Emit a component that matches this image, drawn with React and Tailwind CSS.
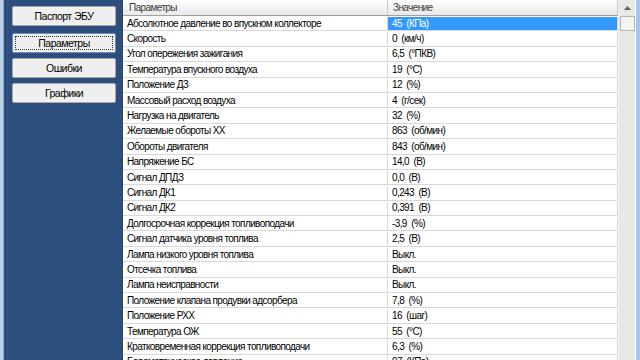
import React from 'react';

const rows = [
  ['Абсолютное давление во впускном коллекторе', '45  (КПа)'],
  ['Скорость', '0  (км/ч)'],
  ['Угол опережения зажигания', '6,5  (°ПКВ)'],
  ['Температура впускного воздуха', '19  (°C)'],
  ['Положение ДЗ', '12  (%)'],
  ['Массовый расход воздуха', '4  (г/сек)'],
  ['Нагрузка на двигатель', '32  (%)'],
  ['Желаемые обороты ХХ', '863  (об/мин)'],
  ['Обороты двигателя', '843  (об/мин)'],
  ['Напряжение БС', '14,0  (В)'],
  ['Сигнал ДПДЗ', '0,0  (В)'],
  ['Сигнал ДК1', '0,243  (В)'],
  ['Сигнал ДК2', '0,391  (В)'],
  ['Долгосрочная коррекция топливоподачи', '-3,9  (%)'],
  ['Сигнал датчика уровня топлива', '2,5  (В)'],
  ['Лампа низкого уровня топлива', 'Выкл.'],
  ['Отсечка топлива', 'Выкл.'],
  ['Лампа неисправности', 'Выкл.'],
  ['Положение клапана продувки адсорбера', '7,8  (%)'],
  ['Положение РХХ', '16  (шаг)'],
  ['Температура ОЖ', '55  (°C)'],
  ['Кратковременная коррекция топливоподачи', '6,3  (%)'],
  ['Барометрическое давление', '97  (КПа)'],
];

const SideButton = ({ label, focused, className = '' }) => (
  <div
    className={`h-[20px] w-[104px] rounded-[2px] border bg-[#efefef] flex items-center justify-center ${
      focused ? 'border-[#6f8fb5] p-[2px]' : 'border-[#a9a9a9]'
    } ${className}`}
  >
    {focused ? (
      <div className="w-full h-full border border-dotted border-[#333] flex items-center justify-center">
        {label}
      </div>
    ) : (
      label
    )}
  </div>
);

export default function App() {
  return (
    <div
      className="w-[640px] h-[360px] overflow-hidden flex bg-white text-[10px] tracking-[-0.6px] text-black leading-none"
      style={{ fontFamily: '"Liberation Sans", Arial, sans-serif' }}
    >
      <div className="w-[4px] h-full bg-[#b8cfe8] border-r border-[#8fa9c8]" />
      <div className="w-[118px] h-full bg-[#2c4f7e] flex flex-col items-start pl-[8px] text-[10.5px] tracking-[-0.5px]">
        <SideButton label="Паспорт ЭБУ" className="mt-[6px]" />
        <SideButton label="Параметры" focused className="mt-[7px]" />
        <SideButton label="Ошибки" className="mt-[5px]" />
        <SideButton label="Графики" className="mt-[5px]" />
      </div>
      <div className="w-[496px] h-full border-l border-[#404040] flex flex-col">
        <div className="h-[16px] flex shrink-0 bg-gradient-to-b from-white to-[#e9e9e9] border-b border-[#a0a0a0] text-[#3a3a3a]">
          <div className="w-[265px] border-r border-[#c8c8c8] pl-[6px] flex items-center">Параметры</div>
          <div className="flex-1 border-r border-[#c8c8c8] pl-[5px] flex items-center">Значение</div>
        </div>
        {rows.map(([name, value], i) => (
          <div key={i} className="h-[15.4px] flex shrink-0 border-b border-[#d8d8d8] pt-[1px]">
            <div className="w-[265px] border-r border-[#d8d8d8] pl-[4px] flex items-center whitespace-pre">{name}</div>
            <div
              className={`flex-1 pl-[4px] flex items-center whitespace-pre border-r border-[#d8d8d8] ${
                i === 0 ? 'bg-[#3399ff] text-white' : ''
              }`}
            >
              {value}
            </div>
          </div>
        ))}
      </div>
      <div className="w-[17px] h-full bg-[#e8e8e8] border-l border-[#f4f4f4] flex flex-col items-center">
        <div className="h-[16px] w-full flex items-center justify-center">
          <svg width="7" height="4" viewBox="0 0 7 4">
            <path d="M0 4 L3.5 0 L7 4 Z" fill="#606060" />
          </svg>
        </div>
        <div className="h-[15px] w-[15px] bg-[#f4f4f4] border border-[#b5b5b5]" />
      </div>
      <div className="flex-1 h-full bg-[#a7c7ea] border-l border-white" />
    </div>
  );
}
